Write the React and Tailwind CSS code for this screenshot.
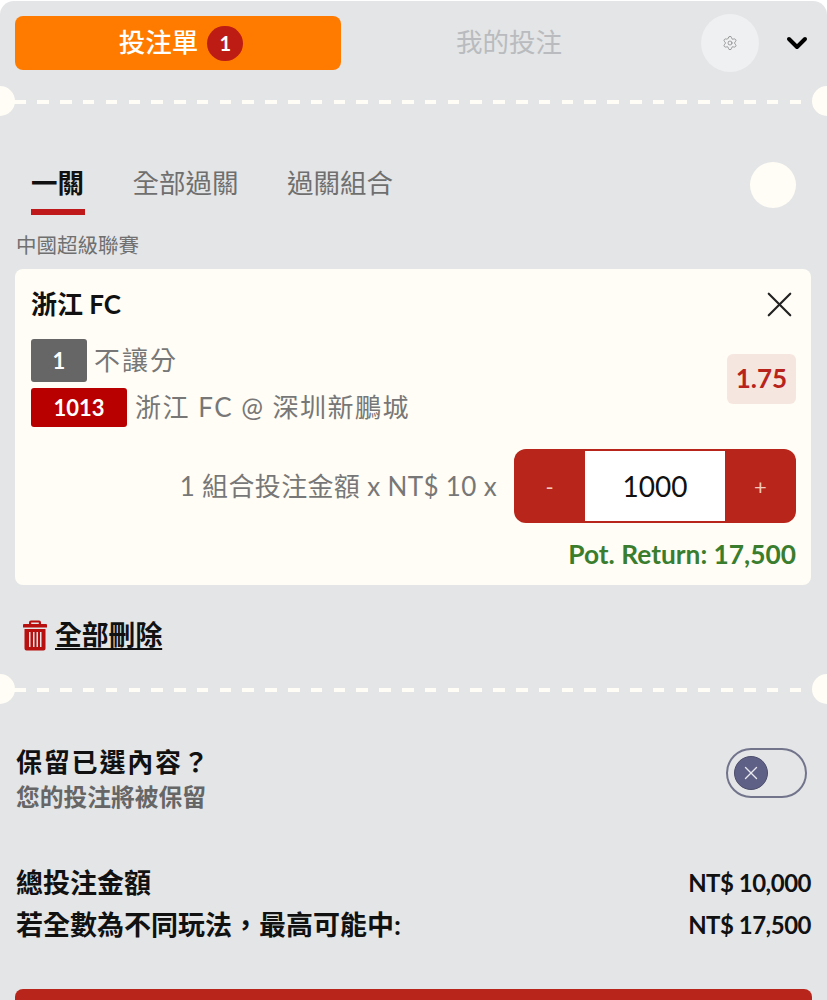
import { Settings, ChevronDown, X } from 'lucide-react'

function Divider() {
  return (
    <div className="relative h-[4px] bg-[repeating-linear-gradient(90deg,#fffdf5_0px,#fffdf5_3.200px,transparent_3.200px,transparent_14.500px,#fffdf5_14.500px,#fffdf5_22.800px)]">
      <div className="absolute left-[-15px] top-[-14px] w-[30px] h-[30px] rounded-full bg-[#fffdf5]" />
      <div className="absolute right-[-15px] top-[-14px] w-[30px] h-[30px] rounded-full bg-[#fffdf5]" />
    </div>
  )
}

function Trash() {
  return (
    <svg width="24" height="31" viewBox="0 0 24 31" fill="#b80f0f">
      <path d="M8 0.5h8a2 2 0 0 1 2 2V4h5a1 1 0 0 1 1 1v2.500H0V5a1 1 0 0 1 1-1h5V2.500a2 2 0 0 1 2-2zM8.200 2.500V4h7.600V2.500z" fillRule="evenodd" />
      <path d="M1.500 9h21v19.500a2 2 0 0 1-2 2h-17a2 2 0 0 1-2-2zM6 12v15h1.500V12zM10 12v15h1.500V12zM13.500 12v15H15V12zM17 12v15h1.500V12z" fillRule="evenodd" />
    </svg>
  )
}

export default function App() {
  return (
    <div className="w-[827px] h-[1000px] overflow-hidden bg-white pt-[1px] font-['Lato','Noto_Sans_CJK_TC',sans-serif]">
      <div className="h-[999px] bg-[#e3e5e7] rounded-t-[14px] overflow-hidden">
        {/* header */}
        <div className="flex items-center pl-[15px] pt-[11px] h-[73px]">
          <div className="w-[326px] h-[54px] pl-[6px] rounded-[8px] bg-[#ff7b00] flex items-center justify-center gap-[9px] text-white text-[26.500px] font-medium">
            <span>投注單</span>
            <span className="w-[36px] h-[35px] rounded-full bg-[#bc1c14] flex items-center justify-center text-[20px] font-bold">1</span>
          </div>
          <div className="w-[336px] text-center text-[26.500px] text-[#b9bbbe]">我的投注</div>
          <div className="w-[58px] h-[58px] rounded-full bg-[#eff0f2] flex items-center justify-center ml-[24px]">
            <Settings size={16} strokeWidth={1} className="text-[#777]" />
          </div>
          <ChevronDown size={32} strokeWidth={3} className="text-black ml-[22px]" />
        </div>

        <div className="mt-[26px]"><Divider /></div>

        {/* tabs */}
        <div className="mt-[50px] pl-[31px] flex items-start justify-between h-[77px]">
          <div className="flex gap-[48.500px] text-[26.500px] leading-[58px]">
            <div className="relative font-bold text-[#111] w-[53px] h-[58px]">
              一關
              <div className="absolute left-0 w-[54px] top-[55px] h-[6px] bg-[#c0191b]" />
            </div>
            <div className="text-[#6f6f6f]">全部過關</div>
            <div className="text-[#6f6f6f]">過關組合</div>
          </div>
          <div className="w-[46px] h-[46px] rounded-full bg-[#fffdf5] mt-[8px] mr-[31px]" />
        </div>

        <div className="pl-[16px] text-[20.500px] leading-[30px] text-[#707070] mt-[-1px]">中國超級聯賽</div>

        {/* bet card */}
        <div className="mx-[15px] mt-[9px] h-[316px] w-[796px] rounded-[8px] bg-[#fffdf5] pl-[16px] pr-[15px]">
          <div className="flex items-center justify-between h-[70px]">
            <span className="text-[26px] font-bold text-[#111]">浙江 FC</span>
            <X size={43} strokeWidth={1.200} className="text-[#222] mr-[-5px]" />
          </div>
          <div className="flex items-center justify-between">
            <div className="flex flex-col gap-[6px]">
              <div className="flex items-center gap-[7px]">
                <span className="w-[56px] h-[43px] rounded-[3px] bg-[#666] text-white text-[22px] font-bold flex items-center justify-center">1</span>
                <span className="text-[26px] tracking-[2px] text-[#777]">不讓分</span>
              </div>
              <div className="flex items-center gap-[8px]">
                <span className="w-[96px] h-[39px] rounded-[3px] bg-[#b80000] text-white text-[22px] font-bold flex items-center justify-center">1013</span>
                <span className="text-[26px] tracking-[1.500px] text-[#777]">浙江 FC @ 深圳新鵬城</span>
              </div>
            </div>
            <div className="w-[69px] h-[50px] mb-[9px] rounded-[6px] bg-[#f6e6e0] text-[#b8241c] text-[26px] font-bold flex items-center justify-center">1.75</div>
          </div>
          <div className="flex items-center justify-end mt-[22px] gap-[17px]">
            <span className="text-[26px] tracking-[0.350px] text-[#777]">1 組合投注金額 x NT$ 10 x</span>
            <div className="w-[282px] h-[74px] rounded-[12px] bg-[#b8251a] flex items-center text-white">
              <div className="w-[71px] text-center text-[22px] text-[#f3c9bd]">-</div>
              <div className="w-[140px] h-[70px] bg-white text-[#111] text-[28px] flex items-center justify-center">1000</div>
              <div className="w-[71px] text-center text-[22px] text-[#f3c9bd]">+</div>
            </div>
          </div>
          <div className="text-right text-[26.300px] font-bold text-[#3a7d2e] mt-[12px]">Pot. Return: 17,500</div>
        </div>

        {/* remove all */}
        <div className="flex items-center gap-[8px] pl-[23px] mt-[34px] h-[32px]">
          <Trash />
          <span className="text-[26.800px] font-bold text-[#111] underline underline-offset-[3px]">全部刪除</span>
        </div>

        <div className="mt-[37px]"><Divider /></div>

        {/* keep selections */}
        <div className="flex items-start justify-between pl-[16px] pr-[20px] mt-[52px]">
          <div>
            <div className="text-[26px] leading-[36px] font-bold tracking-[1.800px] text-[#111]">保留已選內容？</div>
            <div className="text-[23.750px] leading-[34px] font-bold text-[#666]">您的投注將被保留</div>
          </div>
          <div className="w-[81px] h-[50px] mt-[4px] rounded-full border-2 border-[#72748c] flex items-center pl-[6px]">
            <div className="w-[34px] h-[34px] rounded-full bg-[#5f6085] border border-[#4c4d6b] flex items-center justify-center">
              <X size={22} strokeWidth={1.500} className="text-[#e8e8ef]" />
            </div>
          </div>
        </div>

        {/* totals */}
        <div className="px-[16px] mt-[48px] text-[#111] font-bold">
          <div className="flex items-center justify-between h-[42px]">
            <span className="text-[27px]">總投注金額</span>
            <span className="text-[24px] tracking-[-0.500px]">NT$ 10,000</span>
          </div>
          <div className="flex items-center justify-between h-[42px]">
            <span className="text-[27px]">若全數為不同玩法，最高可能中:</span>
            <span className="text-[24px] tracking-[-0.500px]">NT$ 17,500</span>
          </div>
        </div>

        <div className="mx-[15px] mt-[43px] h-[60px] w-[797px] rounded-[8px] bg-[#b8251a]" />
      </div>
    </div>
  )
}
